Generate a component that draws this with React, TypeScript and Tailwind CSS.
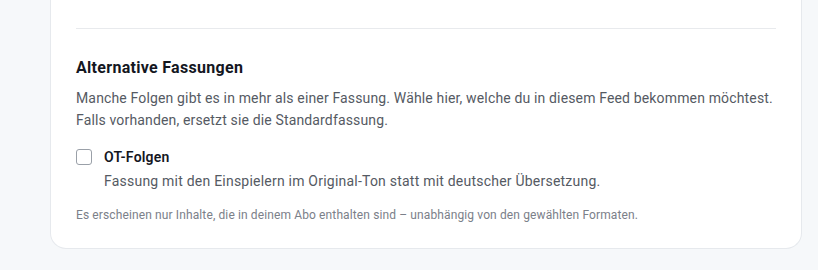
import { useState } from "react";

export default function App() {
    const [ot, setOt] = useState(false);

    return (
        <div className="min-h-[270px] bg-[#f6f8fa] pl-[50px] pr-[16px]" style={{ fontFamily: "Roboto, 'Noto Sans', sans-serif" }}>
            <div className="rounded-b-2xl border-x border-b border-[#e6e9ed] bg-white px-[25px] pb-[25px] pt-[28px]">
                {/* divider from the section above */}
                <div className="h-px bg-[#e8eaed]"></div>

                <h3 className="mt-[29px] text-[16px] font-bold leading-[20px] tracking-[0.3px] text-[#14171f]">Alternative Fassungen</h3>
                <p className="mt-[9px] text-[14px] leading-[22px] tracking-[0.15px] text-[#555a63]">
                    Manche Folgen gibt es in mehr als einer Fassung. Wähle hier, welche du in diesem Feed bekommen möchtest.
                    <br />
                    Falls vorhanden, ersetzt sie die Standardfassung.
                </p>

                <label className="mt-[17px] flex cursor-pointer gap-[12px]">
                    <input
                        type="checkbox"
                        checked={ot}
                        onChange={() => setOt(!ot)}
                        className="mt-[1px] h-[16px] w-[16px] shrink-0 appearance-none rounded-[3px] border border-[#9aa0a8] bg-white checked:bg-[#14171f]"
                    />
                    <div>
                        <div className="text-[14px] font-semibold leading-[18px] tracking-[0.2px] text-[#14171f]">OT-Folgen</div>
                        <div className="mt-[5px] text-[14px] leading-[20px] tracking-[0.22px] text-[#555a63]">
                            Fassung mit den Einspielern im Original-Ton statt mit deutscher Übersetzung.
                        </div>
                    </div>
                </label>

                <p className="mt-[16px] text-[12px] leading-[16px] tracking-[0.12px] text-[#7b8089]">
                    Es erscheinen nur Inhalte, die in deinem Abo enthalten sind – unabhängig von den gewählten Formaten.
                </p>
            </div>
        </div>
    );
}
